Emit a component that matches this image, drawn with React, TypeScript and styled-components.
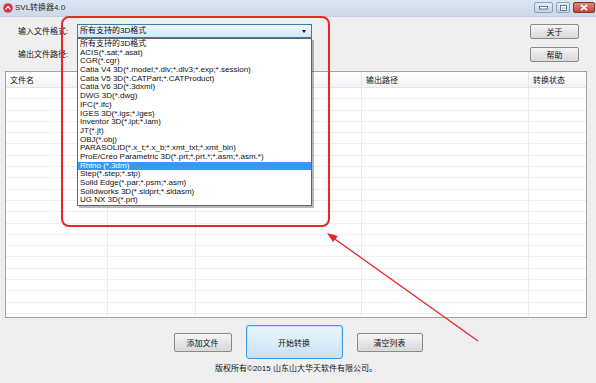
import React from 'react';
import styled, { createGlobalStyle } from 'styled-components';

const FONT = `"Liberation Sans", "Noto Sans CJK SC", sans-serif`;

const GlobalStyle = createGlobalStyle`
  html, body {
    margin: 0;
    padding: 0;
    background: #efefef;
  }
  * {
    box-sizing: border-box;
  }
`;

const formats = [
  '所有支持的3D格式',
  'ACIS(*.sat;*.asat)',
  'CGR(*.cgr)',
  'Catia V4 3D(*.model;*.dlv;*.dlv3;*.exp;*.session)',
  'Catia V5 3D(*.CATPart;*.CATProduct)',
  'Catia V6 3D(*.3dxml)',
  'DWG 3D(*.dwg)',
  'IFC(*.ifc)',
  'IGES 3D(*.igs;*.iges)',
  'Inventor 3D(*.ipt;*.iam)',
  'JT(*.jt)',
  'OBJ(*.obj)',
  'PARASOLID(*.x_t;*.x_b;*.xmt_txt;*.xmt_bin)',
  'ProE/Creo Parametric 3D(*.prt;*.prt.*;*.asm;*.asm.*)',
  'Rhino (*.3dm)',
  'Step(*.step;*.stp)',
  'Solid Edge(*.par;*.psm;*.asm)',
  'Solidworks 3D(*.sldprt;*.sldasm)',
  'UG NX 3D(*.prt)',
];

// the 2nd and 3rd headers sit under the open drop-down list
const columns = [
  { key: 'name', title: '文件名' },
  { key: 'path', title: '' },
  { key: 'size', title: '' },
  { key: 'out', title: '输出路径' },
  { key: 'state', title: '转换状态' },
];

const App = () => {
  return (
    <Window>
      <GlobalStyle />
      <TitleBar>
        <TitleLeft>
          <svg width="10" height="10" viewBox="0 0 10 10">
            <circle cx="5" cy="5" r="4.8" fill="#d9334a" />
            <path d="M2.5 6.5 Q5 2 7.5 6.5" stroke="#fff" strokeWidth="1.2" fill="none" />
            <circle cx="5" cy="4" r="1" fill="#fff" />
          </svg>
          <TitleText>SVL转换器4.0</TitleText>
        </TitleLeft>
        <WinControls>
          <WinButton $w={19}>
            <svg width="9" height="4" viewBox="0 0 9 4">
              <rect x="0.5" y="0.5" width="8" height="2.5" fill="#fff" stroke="#4a5d78" strokeWidth="0.8" />
            </svg>
          </WinButton>
          <WinButton $w={14}>
            <svg width="7" height="6" viewBox="0 0 7 6">
              <rect x="0.5" y="0.5" width="6" height="5" fill="#fff" stroke="#4a5d78" strokeWidth="0.8" />
              <rect x="1.6" y="2" width="3.8" height="2.4" fill="#c7d5e8" />
            </svg>
          </WinButton>
          <WinButton $w={22} $close>
            <svg width="8" height="7" viewBox="0 0 8 7">
              <path d="M1 0.8 L7 6.2 M7 0.8 L1 6.2" stroke="#fff" strokeWidth="1.8" />
            </svg>
          </WinButton>
        </WinControls>
      </TitleBar>

      <Form>
        <Label>输入文件格式:</Label>
        <Combo>
          <span>所有支持的3D格式</span>
          <ComboArrow />
        </Combo>
        <span />
        <SmallButton>关于</SmallButton>

        <Label>输出文件路径:</Label>
        <PathInput />
        <span />
        <SmallButton>帮助</SmallButton>
      </Form>

      <Table>
        <HeaderRow>
          {columns.map((c) => (
            <HeaderCell key={c.key}>{c.title}</HeaderCell>
          ))}
        </HeaderRow>
        {Array.from({ length: 21 }).map((_, i) => (
          <BodyRow key={i}>
            {columns.map((c) => (
              <BodyCell key={c.key} />
            ))}
          </BodyRow>
        ))}
      </Table>

      <ActionBar>
        <ActionButton>添加文件</ActionButton>
        <PrimaryButton>开始转换</PrimaryButton>
        <ActionButton $wide>清空列表</ActionButton>
      </ActionBar>

      <Copyright>版权所有©2015 山东山大华天软件有限公司。</Copyright>

      <DropList>
        {formats.map((f) => (
          <DropItem key={f} $active={f.startsWith('Rhino')}>
            {f}
          </DropItem>
        ))}
      </DropList>

      <RedFrame />

      <ArrowLayer width="596" height="383" viewBox="0 0 596 383">
        <line x1="478" y1="341" x2="332" y2="237" stroke="#e8262a" strokeWidth="1.3" />
        <polygon points="327,233 338,236 333,242" fill="#e8262a" />
      </ArrowLayer>
    </Window>
  );
};

const Window = styled.div`
  position: relative;
  width: 596px;
  height: 383px;
  overflow: hidden;
  background: #efefef;
  font-family: ${FONT};
  font-size: 8px;
  color: #111;
  display: flex;
  flex-direction: column;
`;

const TitleBar = styled.div`
  height: 17px;
  display: flex;
  align-items: flex-start;
  justify-content: space-between;
  padding: 3px 1px 0 3px;
  background: linear-gradient(#dce6f2, #cbd9ea);
  border-bottom: 1px solid #c3cfdd;
`;

const TitleLeft = styled.div`
  display: flex;
  align-items: center;
  gap: 2px;
`;

const TitleText = styled.span`
  font-size: 8px;
  line-height: 10px;
  color: #1e2a3a;
`;

const WinControls = styled.div`
  display: flex;
  gap: 3px;
  margin-top: -1px;
`;

const WinButton = styled.div<{ $w: number; $close?: boolean }>`
  width: ${(p) => p.$w}px;
  height: 11px;
  display: flex;
  align-items: center;
  justify-content: center;
  border: 1px solid ${(p) => (p.$close ? '#8f2f28' : '#8da2bd')};
  border-radius: 2px;
  background: ${(p) =>
    p.$close ? 'linear-gradient(#e08a80, #c6443a)' : 'linear-gradient(#e4ecf6, #c2d1e5)'};
`;

const Form = styled.div`
  display: grid;
  grid-template-columns: 59px 235px 1fr 49px;
  grid-template-rows: 15px 15px;
  row-gap: 8px;
  align-items: center;
  padding: 7px 17px 0 18px;
`;

const Label = styled.span`
  font-size: 8px;
  line-height: 10px;
  color: #111;
`;

const Combo = styled.div`
  height: 14px;
  align-self: start;
  display: flex;
  align-items: center;
  justify-content: space-between;
  padding: 0 5px 0 2px;
  border: 1px solid #3d7bad;
  background: linear-gradient(#eef6fd, #d5e8f8);
  line-height: 10px;
`;

const ComboArrow = styled.span`
  width: 0;
  height: 0;
  border-left: 2.5px solid transparent;
  border-right: 2.5px solid transparent;
  border-top: 3px solid #111;
`;

const PathInput = styled.div`
  height: 14px;
  border: 1px solid #abadb3;
  background: #fff;
`;

const SmallButton = styled.div`
  height: 15px;
  display: flex;
  align-items: center;
  justify-content: center;
  border: 1px solid #8a8a8a;
  border-radius: 2px;
  background: linear-gradient(#f6f6f6 0%, #e6e6e6 50%, #d9d9d9 100%);
  font-size: 8px;
`;

const Table = styled.div`
  margin: 9px 9px 0 5px;
  height: 247px;
  overflow: hidden;
  background: #fff;
  border: 1px solid #9ea3aa;
`;

const GRID = '102px 88px 166px 167px 1fr';

const HeaderRow = styled.div`
  display: grid;
  grid-template-columns: ${GRID};
  height: 16px;
  background: linear-gradient(#ffffff, #f2f3f5);
  border-bottom: 1px solid #e3e4e6;
`;

const HeaderCell = styled.div`
  display: flex;
  align-items: center;
  padding-left: 4px;
  border-right: 1px solid #e3e4e6;
  font-size: 8px;
  &:last-child {
    border-right: none;
  }
`;

const BodyRow = styled.div`
  display: grid;
  grid-template-columns: ${GRID};
  height: 11.3px;
  border-bottom: 1px solid #efefef;
`;

const BodyCell = styled.div`
  border-right: 1px solid #ececec;
  &:last-child {
    border-right: none;
  }
`;

const ActionBar = styled.div`
  margin-top: 7px;
  height: 34px;
  display: flex;
  align-items: center;
  justify-content: center;
  gap: 14px;
`;

const ActionButton = styled.div<{ $wide?: boolean }>`
  width: ${(p) => (p.$wide ? 66 : 58)}px;
  height: 19px;
  display: flex;
  align-items: center;
  justify-content: center;
  border: 1px solid #8a8a8a;
  border-radius: 2px;
  background: linear-gradient(#f6f6f6 0%, #e6e6e6 50%, #d9d9d9 100%);
  font-size: 8px;
`;

const PrimaryButton = styled.div`
  width: 97px;
  height: 34px;
  display: flex;
  align-items: center;
  justify-content: center;
  border: 1px solid #3c9ed8;
  border-radius: 3px;
  background: linear-gradient(#eaf5fc 0%, #dbedf9 50%, #c5e1f4 100%);
  box-shadow: inset 0 0 0 1px #bfe3f8;
  font-size: 8px;
`;

const Copyright = styled.div`
  margin-top: 5px;
  line-height: 10px;
  font-size: 8px;
  text-align: center;
  padding-right: 4px;
`;

const DropList = styled.div`
  position: absolute;
  left: 77px;
  top: 38px;
  width: 235px;
  height: 168px;
  padding: 1px 0 0 0;
  background: #fff;
  border: 1px solid #646464;
  box-shadow: 2px 2px 0 rgba(0, 0, 0, 0.28);
  display: flex;
  flex-direction: column;
`;

const DropItem = styled.div<{ $active?: boolean }>`
  height: 8.7px;
  line-height: 8.7px;
  padding-left: 2px;
  font-size: 8px;
  white-space: nowrap;
  color: ${(p) => (p.$active ? '#fff' : '#111')};
  background: ${(p) => (p.$active ? '#3399ff' : 'transparent')};
`;

const RedFrame = styled.div`
  position: absolute;
  left: 61px;
  top: 16px;
  width: 269px;
  height: 211px;
  border: 2px solid #e8262a;
  border-radius: 8px;
  pointer-events: none;
`;

const ArrowLayer = styled.svg`
  position: absolute;
  left: 0;
  top: 0;
  pointer-events: none;
`;

export default App;
